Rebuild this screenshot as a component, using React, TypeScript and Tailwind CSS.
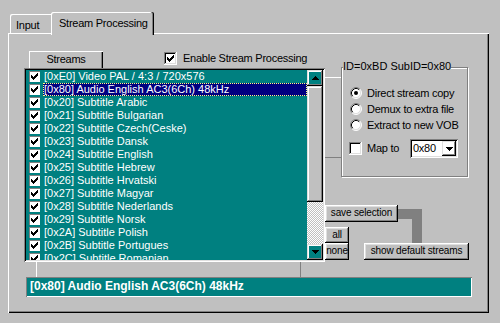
import React from "react";

const raised =
  "shadow-[inset_-1px_-1px_#000,inset_1px_1px_#fff,inset_-2px_-2px_#808080,inset_2px_2px_#dfdfdf]";
const raisedSB =
  "shadow-[inset_-1px_-1px_#000,inset_1px_1px_#dfdfdf,inset_-2px_-2px_#808080,inset_2px_2px_#fff]";
const sunken =
  "shadow-[inset_1px_1px_#808080,inset_-1px_-1px_#fff,inset_2px_2px_#000,inset_-2px_-2px_#dfdfdf]";

const CHECK = "M0 2h1v3H0z M1 3h1v3H1z M2 4h1v3H2z M3 3h1v3H3z M4 2h1v3H4z M5 1h1v3H5z M6 0h1v3H6z";

function Checkbox13({ checked, className = "" }: { checked?: boolean; className?: string }) {
  return (
    <svg width="13" height="13" shapeRendering="crispEdges" className={"shrink-0 " + className}>
      <rect width="13" height="13" fill="#fff" />
      <path d="M0 0H12V1H1V12H0Z" fill="#808080" />
      <path d="M1 1H11V2H2V11H1Z" fill="#000" />
      <path d="M12 0H13V13H0V12H12Z" fill="#fff" />
      <path d="M11 1H12V12H1V11H11Z" fill="#dfdfdf" />
      {checked && <path d={CHECK} fill="#000" transform="translate(3,3)" />}
    </svg>
  );
}

function ListCheck() {
  return (
    <svg width="11" height="11" shapeRendering="crispEdges" className="shrink-0 ml-[3px] mt-[1px]">
      <rect width="11" height="11" fill="#fff" />
      <path d="M0 0H11V1H1V11H0Z" fill="#808080" />
      <path d={CHECK} fill="#000" transform="translate(2,2)" />
    </svg>
  );
}

function Radio({ checked }: { checked?: boolean }) {
  return (
    <svg width="12" height="12" className="shrink-0">
      <circle cx="6" cy="6" r="5" fill="#fff" />
      <path d="M2.11 9.89A5.5 5.5 0 0 1 9.89 2.11" stroke="#808080" fill="none" />
      <path d="M9.89 2.11A5.5 5.5 0 0 1 2.11 9.89" stroke="#fff" fill="none" />
      <path d="M2.82 9.18A4.5 4.5 0 0 1 9.18 2.82" stroke="#000" fill="none" />
      <path d="M9.18 2.82A4.5 4.5 0 0 1 2.82 9.18" stroke="#dfdfdf" fill="none" />
      {checked && <circle cx="6" cy="6" r="2" fill="#000" />}
    </svg>
  );
}

function Arrow({ up }: { up?: boolean }) {
  return (
    <svg width="7" height="4" shapeRendering="crispEdges">
      {up ? (
        <path d="M3 0h1v1h1v1h1v1h1v1H0V3h1V2h1V1h1z" fill="#000" />
      ) : (
        <path d="M0 0h7v1H6v1H5v1H4v1H3V3H2V2H1V1H0z" fill="#000" />
      )}
    </svg>
  );
}

function Btn({ children, className }: { children: React.ReactNode; className: string }) {
  return (
    <div
      className={
        "flex justify-center items-start whitespace-nowrap text-[10px] tracking-[-0.15px] leading-[15px] bg-[#c0c0c0] " +
        raised +
        " " +
        className
      }
    >
      {children}
    </div>
  );
}

const rows = [
  "[0xE0] Video PAL / 4:3 / 720x576",
  "[0x80] Audio English AC3(6Ch) 48kHz",
  "[0x20] Subtitle Arabic",
  "[0x21] Subtitle Bulgarian",
  "[0x22] Subtitle Czech(Ceske)",
  "[0x23] Subtitle Dansk",
  "[0x24] Subtitle English",
  "[0x25] Subtitle Hebrew",
  "[0x26] Subtitle Hrvatski",
  "[0x27] Subtitle Magyar",
  "[0x28] Subtitle Nederlands",
  "[0x29] Subtitle Norsk",
  "[0x2A] Subtitle Polish",
  "[0x2B] Subtitle Portugues",
  "[0x2C] Subtitle Romanian",
];

export default function App() {
  return (
    <div className="w-[500px] h-[323px] overflow-hidden bg-[#c0c0c0] pt-[12px] px-[8px] font-['Liberation_Sans',Arial,sans-serif] text-[11px] tracking-[-0.25px] text-black">
      {/* Tabs */}
      <div className="relative z-10 flex items-start h-[23px] -mb-[2px]">
        <div className="ml-[2px] mt-[2px] w-[41px] h-[19px] pl-[6px] pt-[5px] leading-[13px] rounded-tl-[2px] shadow-[inset_1px_1px_#fff]">
          Input
        </div>
        <div className="w-[103px] h-[23px] pl-[8px] pt-[5px] leading-[13px] bg-[#c0c0c0] rounded-t-[2px] shadow-[inset_-1px_0_#000,inset_-2px_0_#808080,inset_1px_1px_#fff]">
          Stream Processing
        </div>
      </div>

      {/* Panel */}
      <div className="w-[481px] h-[280px] flex flex-col shadow-[inset_1px_1px_#fff,inset_-1px_-1px_#000,inset_-2px_-2px_#808080]">
        <div className="flex items-start">
          {/* Column 1 */}
          <div className="ml-[16px] mt-[18px] w-[301px] flex flex-col">
            <div className="flex items-start h-[17px]">
              <div className="ml-[5px] w-[74px] h-[17px] text-center leading-[17px] shadow-[inset_1px_1px_#fff,inset_-1px_0_#000,inset_-2px_0_#808080]">
                Streams
              </div>
              <Checkbox13 checked className="ml-[61px] mt-[1px]" />
              <span className="ml-[6px] mt-[1px] leading-[13px] whitespace-nowrap">Enable Stream Processing</span>
            </div>
            <div className={"h-[194px] p-[2px] bg-[#008080] flex " + sunken}>
              <div className="flex-1 overflow-hidden">
                {rows.map((r, i) => (
                  <div key={r} className="flex items-start h-[13px]">
                    <ListCheck />
                    <div
                      className={
                        "ml-[3px] flex-1 h-[13px] pl-[1px] leading-[13px] tracking-normal text-white whitespace-nowrap " +
                        (i === 1 ? "bg-[#000080] outline-1 outline-dotted outline-[#ffff80] -outline-offset-1" : "")
                      }
                    >
                      {r}
                    </div>
                  </div>
                ))}
              </div>
              <div className="w-[16px] flex flex-col">
                <div className={"h-[16px] flex items-center justify-center " + raisedSB}>
                  <Arrow up />
                </div>
                <div className={"h-[116px] bg-[#c0c0c0] " + raisedSB} />
                <div className="flex-1 bg-[image:repeating-conic-gradient(#fff_0_25%,#c0c0c0_0_50%)] bg-[length:2px_2px]" />
                <div className={"h-[16px] flex items-center justify-center " + raisedSB}>
                  <Arrow />
                </div>
              </div>
            </div>
            <div className="ml-[12px] w-[265px] h-[15px] border-l border-white border-r border-r-[#808080]" />
          </div>

          {/* Column 2 */}
          <div className="mt-[34px] flex flex-col">
            <div className="flex items-start">
              <div className="mt-[10px] w-[16px] h-[81px] border-t border-t-white border-b border-b-[#808080]" />
              <div className="relative w-[127px] h-[110px] border border-[#808080] shadow-[inset_1px_1px_#fff,1px_1px_#fff] pl-[8px] pt-[17px]">
                <span className="absolute left-[1px] -top-[8px] bg-[#c0c0c0] leading-[13px] tracking-normal whitespace-nowrap">
                  ID=0xBD SubID=0x80
                </span>
                {[
                  ["Direct stream copy", true],
                  ["Demux to extra file", false],
                  ["Extract to new VOB", false],
                ].map(([label, c]) => (
                  <div key={label as string} className="flex items-center h-[16px]">
                    <Radio checked={c as boolean} />
                    <span className="ml-[5px] leading-[13px] whitespace-nowrap">{label as string}</span>
                  </div>
                ))}
                <div className="mt-[6px] flex items-center h-[19px]">
                  <Checkbox13 className="-ml-[1px]" />
                  <span className="ml-[5px] w-[43px] leading-[13px] whitespace-nowrap">Map to</span>
                  <div className={"w-[48px] h-[19px] p-[2px] bg-white flex " + sunken}>
                    <span className="flex-1 pl-[1px] leading-[15px]">0x80</span>
                    <div className={"w-[14px] h-[15px] flex items-center justify-center " + raisedSB}>
                      <Arrow />
                    </div>
                  </div>
                </div>
              </div>
            </div>

            <div className="mt-[28px] flex items-start">
              <Btn className="w-[73px] h-[17px]">save selection</Btn>
              <svg width="24" height="13" className="mt-[4px]" shapeRendering="crispEdges">
                <path d="M0 0H24V13H14V10H0Z" fill="#808080" />
              </svg>
            </div>
            <div className="flex items-start">
              <div className="mt-[5px] flex flex-col">
                <Btn className="w-[24px] h-[16px]">all</Btn>
                <Btn className="w-[24px] h-[17px]">none</Btn>
              </div>
              <div className="flex flex-col">
                <div className="ml-[63px] w-[10px] h-[21px] bg-[#808080]" />
                <Btn className="ml-[15px] w-[105px] h-[17px]">show default streams</Btn>
              </div>
            </div>
          </div>
        </div>

        {/* Status */}
        <div className="ml-[18px] w-[446px] h-[20px] bg-[#008080] shadow-[inset_1px_1px_#808080,inset_-1px_-1px_#fff] pl-[4px] text-white font-bold text-[12px] tracking-normal leading-[18px] whitespace-nowrap">
          [0x80] Audio English AC3(6Ch) 48kHz
        </div>
      </div>
    </div>
  );
}
